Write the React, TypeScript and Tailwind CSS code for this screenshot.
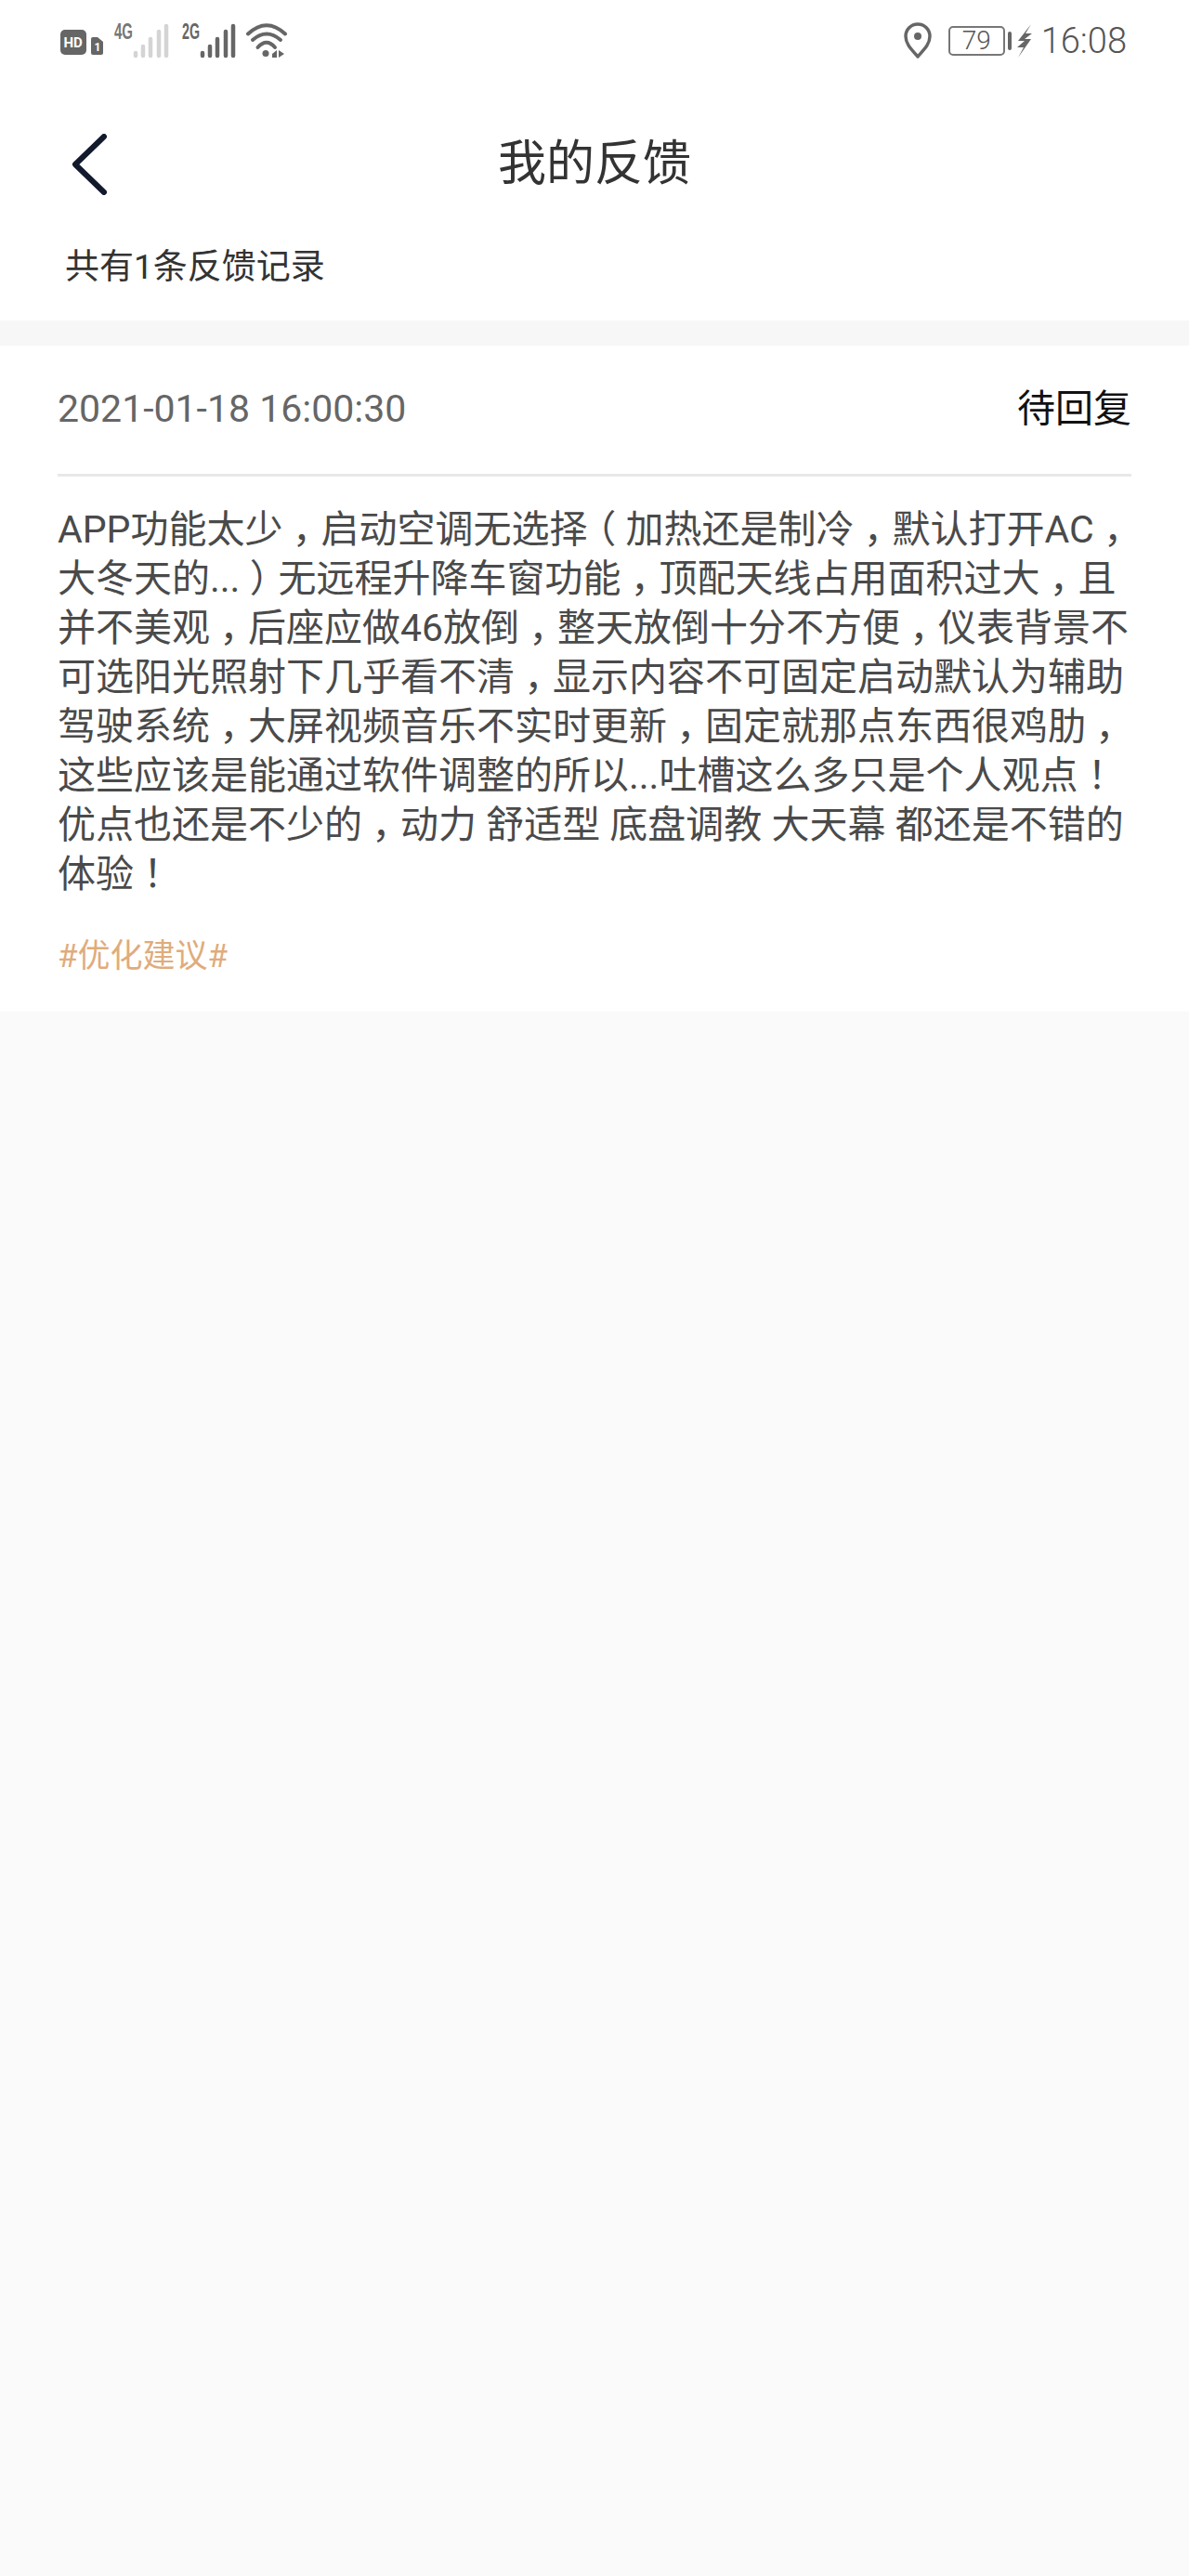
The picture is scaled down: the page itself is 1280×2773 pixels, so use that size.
import type { ReactNode } from "react";

const LINES = [
  "APP功能太少，启动空调无选择（加热还是制冷，默认打开AC，",
  "大冬天的...）无远程升降车窗功能，顶配天线占用面积过大，且",
  "并不美观，后座应做46放倒，整天放倒十分不方便，仪表背景不",
  "可选阳光照射下几乎看不清，显示内容不可固定启动默认为辅助",
  "驾驶系统，大屏视频音乐不实时更新，固定就那点东西很鸡肋，",
  "这些应该是能通过软件调整的所以...吐槽这么多只是个人观点！",
  "优点也还是不少的，动力 舒适型 底盘调教 大天幕 都还是不错的",
  "体验！",
];

function renderLine(line: string): ReactNode[] {
  return line.split(/([，！（）])/).map((part, i) =>
    /^[，！（）]$/.test(part) ? (
      <span key={i} className="px-[0.25em] [font-feature-settings:'halt']">{part}</span>
    ) : (
      part
    ),
  );
}

export default function App() {
  return (
    <div className="min-h-[2773px] bg-[#fafafa] font-['Roboto','Noto_Sans_CJK_SC',sans-serif]">
      <div className="bg-white h-[345px]">
        <div className="flex h-[88px] items-center justify-between pl-[65px] pr-[67px]">
          <svg width="250" height="50" viewBox="0 0 250 50" fill="none">
            <rect x="0" y="13" width="28" height="27" rx="5" fill="#666" />
            <text x="3.500" y="32" fontSize="15" fontWeight="700" fill="#fff" fontFamily="Roboto, sans-serif">HD</text>
            <path d="M33 23a2 2 0 0 1 2-2h5l6 5v12a2 2 0 0 1-2 2h-9a2 2 0 0 1-2-2z" fill="#666" />
            <text x="36.500" y="36" fontSize="12" fontWeight="700" fill="#fff" fontFamily="Roboto, sans-serif">1</text>
            <text x="58" y="23" fontSize="23" fontWeight="700" fill="#777" fontFamily="Liberation Sans, sans-serif" textLength="20" lengthAdjust="spacingAndGlyphs">4G</text>
            <g stroke="#d4d4d4" strokeWidth="4.5" strokeLinecap="round">
              <path d="M81 41v-3" /><path d="M89 41v-10" /><path d="M97 41v-18" /><path d="M106 41v-26" /><path d="M114 41v-32" />
            </g>
            <text x="131" y="23" fontSize="23" fontWeight="700" fill="#666" fontFamily="Liberation Sans, sans-serif" textLength="19" lengthAdjust="spacingAndGlyphs">2G</text>
            <g stroke="#666" strokeWidth="4.5" strokeLinecap="round">
              <path d="M153 41v-3" /><path d="M161 41v-10" /><path d="M169 41v-18" /><path d="M178 41v-26" /><path d="M186 41v-32" />
            </g>
            <g stroke="#666" strokeWidth="4" strokeLinecap="round">
              <path d="M202 17.500Q222-1 242 17.500" /><path d="M207 24Q222 11 237 24" /><path d="M212.500 32Q222 21.500 231 32" />
            </g>
            <circle cx="221" cy="38.500" r="3.500" fill="#666" />
            <path d="M228 39l5-4v8h-5zM235 35l6 4-6 4z" fill="#666" />
          </svg>
          <div className="flex items-center">
            <svg width="32" height="40" viewBox="0 0 32 40" fill="none" className="mr-[17px]">
              <path d="M16 37C8 28 3 23 3 15a13 13 0 0 1 26 0c0 8-5 13-13 22z" stroke="#666" strokeWidth="3.500" strokeLinejoin="round" />
              <circle cx="16" cy="15" r="4" fill="#666" />
            </svg>
            <div className="flex h-[32px] w-[61px] items-center justify-center rounded-[5px] border-2 border-[#777] text-[28px] leading-none font-light text-[#555]">79</div>
            <div className="ml-[3px] h-[20px] w-[4px] rounded-full bg-[#666]" />
            <svg width="16" height="36" viewBox="0 0 16 36" className="ml-[6px]">
              <path d="M15 0L1 18h7L0 25h7L1 36l14-20H8l8-6H9z" fill="#666" />
            </svg>
            <span className="ml-[10px] text-[38px] leading-none font-light text-[#555]">16:08</span>
          </div>
        </div>
        <div className="relative mt-[46px] flex h-[86px] items-center justify-center">
          <svg width="42" height="66" viewBox="0 0 42 66" fill="none" className="absolute left-[75px] top-[10px]">
            <path d="M37 3L6 33l31 30" stroke="#131a2e" strokeWidth="6" strokeLinecap="round" strokeLinejoin="round" />
          </svg>
          <h1 className="text-[52px] leading-none font-normal text-[#333]">我的反馈</h1>
        </div>
        <p className="mt-[42px] pl-[70px] text-[37px] leading-[52px] text-[#333]">共有1条反馈记录</p>
      </div>
      <div className="h-[27px] bg-[#f7f7f7]" />
      <div className="bg-white h-[717px]">
        <div className="mx-[62px] flex h-[141px] items-center justify-between border-b-[3px] border-[#e8e8e8]">
          <span className="text-[41px] text-[#666]">2021-01-18 16:00:30</span>
          <span className="text-[41px] text-[#111]">待回复</span>
        </div>
        <div className="mx-[62px] mt-[31px] text-[41px] leading-[53px] text-[#4a4a4a]">
          {LINES.map((line) => (
            <div key={line} className="whitespace-nowrap">{renderLine(line)}</div>
          ))}
        </div>
        <p className="mt-[37px] pl-[62px] text-[35px] leading-[50px] text-[#dfac7c]">#优化建议#</p>
      </div>
    </div>
  );
}
